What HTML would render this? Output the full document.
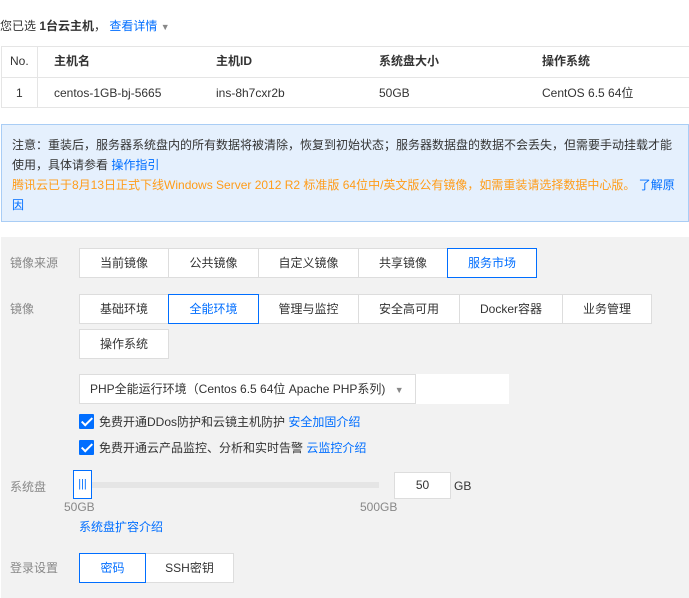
<!DOCTYPE html>
<html><head><meta charset="utf-8"><style>
*{box-sizing:border-box;margin:0;padding:0}
body{width:689px;height:598px;overflow:hidden;background:#fff;font-family:"Liberation Sans","Noto Sans CJK SC",sans-serif;font-size:12px;line-height:16px;color:#333;position:relative}
.a{position:absolute;white-space:nowrap}
.blue{color:#006eff}
.lbl{color:#888}
.btn{position:absolute;background:#fff;border:1px solid #ddd;text-align:center;line-height:28px;height:30px;color:#333}
.sel{border:1px solid #006eff;color:#006eff;z-index:2}
.cb{position:absolute;width:15px;height:15px;background:#006eff;border-radius:1px}
.cb:after{content:"";position:absolute;left:5px;top:1px;width:4px;height:9px;border:solid #fff;border-width:0 2px 2px 0;transform:rotate(45deg)}
</style></head><body>
<div class="a" style="left:0;top:18px;">您已选 <b>1台云主机</b>， <span class="blue">查看详情</span> <span style="color:#888;font-size:9px">▼</span></div>
<div class="a" style="left:1px;top:46px;width:688px;height:62px;border:1px solid #e5e5e5;border-right:none"></div>
<div class="a" style="left:1px;top:77px;width:688px;height:1px;background:#e5e5e5"></div>
<div class="a" style="left:37px;top:46px;width:1px;height:62px;background:#e5e5e5"></div>
<div class="a" style="left:10px;top:53px;">No.</div>
<div class="a" style="left:54px;top:53px;font-weight:bold">主机名</div>
<div class="a" style="left:216px;top:53px;font-weight:bold">主机ID</div>
<div class="a" style="left:379px;top:53px;font-weight:bold">系统盘大小</div>
<div class="a" style="left:542px;top:53px;font-weight:bold">操作系统</div>
<div class="a" style="left:16px;top:85px;">1</div>
<div class="a" style="left:54px;top:85px;">centos-1GB-bj-5665</div>
<div class="a" style="left:216px;top:85px;">ins-8h7cxr2b</div>
<div class="a" style="left:379px;top:85px;">50GB</div>
<div class="a" style="left:542px;top:85px;">CentOS 6.5 64位</div>
<div class="a" style="left:1px;top:124px;width:688px;height:98px;background:#e5f0fd;border:1px solid #a9cdf5;padding:10px 0 0 10px;line-height:20px;white-space:normal">
注意：重装后，服务器系统盘内的所有数据将被清除，恢复到初始状态；服务器数据盘的数据不会丢失，但需要手动挂载才能<br>使用，具体请参看 <span class="blue">操作指引</span><br>
<span style="color:#ff9c19">腾讯云已于8月13日正式下线Windows Server 2012 R2 标准版 64位中/英文版公有镜像，如需重装请选择数据中心版。</span> <span class="blue">了解原</span><br><span class="blue">因</span></div>
<div class="a" style="left:1px;top:237px;width:688px;height:361px;background:#f2f2f2"></div>
<div class="a lbl" style="left:10px;top:255px;">镜像来源</div>
<div class="btn" style="left:79px;top:248px;width:90px">当前镜像</div>
<div class="btn" style="left:168px;top:248px;width:91px">公共镜像</div>
<div class="btn" style="left:258px;top:248px;width:101px">自定义镜像</div>
<div class="btn" style="left:358px;top:248px;width:90px">共享镜像</div>
<div class="btn sel" style="left:447px;top:248px;width:90px">服务市场</div>
<div class="a lbl" style="left:10px;top:301px;">镜像</div>
<div class="btn" style="left:79px;top:294px;width:90px">基础环境</div>
<div class="btn sel" style="left:168px;top:294px;width:91px">全能环境</div>
<div class="btn" style="left:258px;top:294px;width:101px">管理与监控</div>
<div class="btn" style="left:358px;top:294px;width:102px">安全高可用</div>
<div class="btn" style="left:459px;top:294px;width:104px">Docker容器</div>
<div class="btn" style="left:562px;top:294px;width:90px">业务管理</div>
<div class="btn" style="left:79px;top:329px;width:90px">操作系统</div>
<div class="a" style="left:79px;top:374px;width:430px;height:30px;background:#fff"></div>
<div class="a" style="left:79px;top:374px;width:337px;height:30px;background:#fff;border:1px solid #ddd;padding-left:10px;line-height:28px">PHP全能运行环境（Centos 6.5 64位 Apache PHP系列) <span style="color:#888;font-size:9px;margin-left:6px">▼</span></div>
<div class="cb" style="left:79px;top:414px"></div>
<div class="a" style="left:99px;top:414px;">免费开通DDos防护和云镜主机防护 <span class="blue">安全加固介绍</span></div>
<div class="cb" style="left:79px;top:440px"></div>
<div class="a" style="left:99px;top:440px;">免费开通云产品监控、分析和实时告警 <span class="blue">云监控介绍</span></div>
<div class="a lbl" style="left:10px;top:479px;">系统盘</div>
<div class="a" style="left:79px;top:482px;width:300px;height:6px;background:#e5e5e5"></div>
<div class="a" style="left:73px;top:470px;width:19px;height:29px;background:#fff;border:1px solid #006eff;text-align:center;color:#006eff;line-height:26px;font-size:11px">|||</div>
<div class="a lbl" style="left:64px;top:499px;">50GB</div>
<div class="a lbl" style="left:360px;top:499px;">500GB</div>
<div class="a" style="left:394px;top:472px;width:57px;height:27px;background:#fff;border:1px solid #ddd;text-align:center;line-height:25px">50</div>
<div class="a" style="left:454px;top:478px;">GB</div>
<div class="a blue" style="left:79px;top:519px;">系统盘扩容介绍</div>
<div class="a lbl" style="left:10px;top:560px;">登录设置</div>
<div class="btn sel" style="left:79px;top:553px;width:67px">密码</div>
<div class="btn" style="left:145px;top:553px;width:89px">SSH密钥</div>
</body></html>
